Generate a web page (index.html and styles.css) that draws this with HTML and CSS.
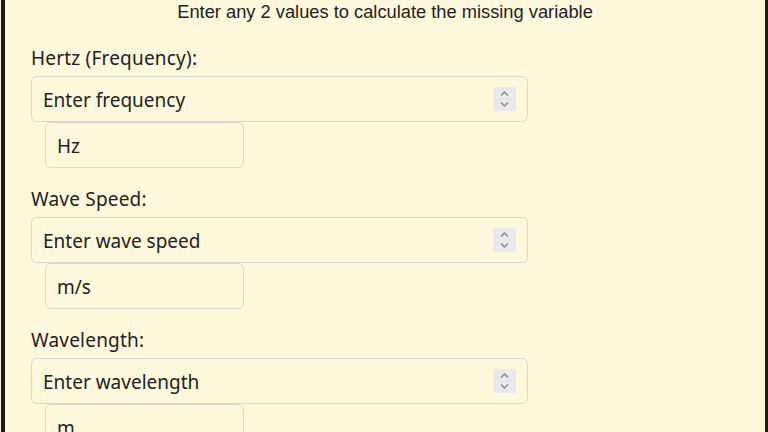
FILE: index.html
```html
<!DOCTYPE html>
<html lang="en">
<head>
<meta charset="utf-8">
<title>Wave Calculator</title>
<link rel="stylesheet" href="styles.css">
</head>
<body>
<div class="frame">
  <p class="hint">Enter any 2 values to calculate the missing variable</p>

  <div class="group">
    <label class="label" for="freq">Hertz (Frequency):</label>
    <div class="field">
      <input id="freq" class="num" type="text" placeholder="Enter frequency">
      <span class="spin"><svg width="23" height="24" viewBox="0 0 23 24"><path d="M8 8.5 L11.5 5 L15 8.5" /><path d="M8 15.5 L11.5 19 L15 15.5" /></svg></span>
    </div>
    <div class="unit">Hz</div>
  </div>

  <div class="group">
    <label class="label" for="speed">Wave Speed:</label>
    <div class="field">
      <input id="speed" class="num" type="text" placeholder="Enter wave speed">
      <span class="spin"><svg width="23" height="24" viewBox="0 0 23 24"><path d="M8 8.5 L11.5 5 L15 8.5" /><path d="M8 15.5 L11.5 19 L15 15.5" /></svg></span>
    </div>
    <div class="unit">m/s</div>
  </div>

  <div class="group">
    <label class="label" for="wave">Wavelength:</label>
    <div class="field">
      <input id="wave" class="num" type="text" placeholder="Enter wavelength">
      <span class="spin"><svg width="23" height="24" viewBox="0 0 23 24"><path d="M8 8.5 L11.5 5 L15 8.5" /><path d="M8 15.5 L11.5 19 L15 15.5" /></svg></span>
    </div>
    <div class="unit">m</div>
  </div>
</div>
</body>
</html>
```

FILE: styles.css
```css
html, body {
  margin: 0;
  padding: 0;
  background: #fff8dc;
  height: 100%;
  overflow: hidden;
}

.frame {
  margin-left: 1px;
  border-left: 4px solid #1c1c1c;
  border-right: 3px solid #1c1c1c;
  min-height: 432px;
  box-sizing: border-box;
  padding: 0 0 0 26px;
  font-family: "Noto Sans", "Open Sans", sans-serif;
  color: #222;
}

.hint {
  margin: 0 0 0 -26px;
  padding-top: 1px;
  height: 45px;
  text-align: center;
  font-family: "Liberation Sans", Arial, sans-serif;
  font-size: 18.3px;
  line-height: 22px;
  color: #222;
}

.group {
  margin-bottom: 19px;
}

.label {
  display: block;
  font-size: 19px;
  letter-spacing: 0.2px;
  line-height: 24px;
  margin: 0 0 6px;
  color: #222;
}

.field {
  display: flex;
  align-items: center;
  width: 497px;
  height: 46px;
  box-sizing: border-box;
  border: 1px solid #dcd8cc;
  border-radius: 6px;
  padding: 0 11px;
}

.num {
  flex: 1;
  min-width: 0;
  border: 0;
  outline: 0;
  padding: 0;
  margin-top: 1px;
  background: transparent;
  font-family: inherit;
  font-size: 19px;
  color: #222;
}

.num::placeholder {
  color: #222;
  opacity: 1;
}

.spin {
  display: flex;
  width: 23px;
  height: 24px;
  background: #e9e8ee;
}

.spin svg path {
  fill: none;
  stroke: #8a8a92;
  stroke-width: 1.5;
}

.unit {
  margin-left: 14px;
  width: 199px;
  height: 46px;
  box-sizing: border-box;
  border: 1px solid #dcd8cc;
  border-radius: 6px;
  padding: 1px 11px 0;
  display: flex;
  align-items: center;
  font-size: 19px;
  color: #222;
}
```
